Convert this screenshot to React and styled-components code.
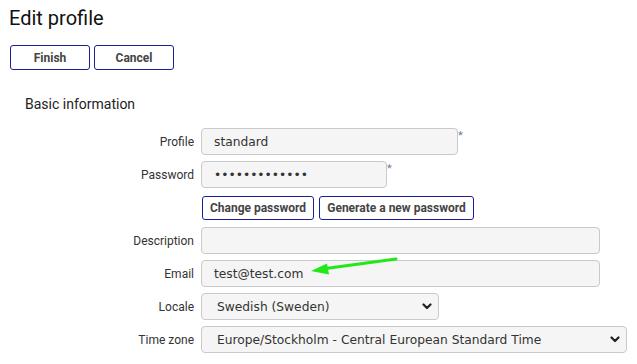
import React from 'react'
import styled, { createGlobalStyle } from 'styled-components'

const GlobalStyle = createGlobalStyle`
    body {
        margin: 0;
        background: #fff;
        font-family: Roboto, "Liberation Sans", sans-serif;
    }
`

const Chevron = () => (
    <ChevronIcon width="10" height="7" viewBox="0 0 10 7">
        <path d="M1.5 1.5 L5 5 L8.5 1.5" fill="none" stroke="#222" strokeWidth="2.2" strokeLinecap="round" strokeLinejoin="round" />
    </ChevronIcon>
)

const GreenArrow = () => (
    <ArrowIcon width="100" height="20" viewBox="0 0 100 20">
        <line x1="94" y1="2" x2="20" y2="12" stroke="#22e81a" strokeWidth="3" strokeLinecap="round" />
        <polygon points="9,14 25,6.5 27,17.5" fill="#22e81a" />
    </ArrowIcon>
)

const App = () => {
    return (
        <Page>
            <GlobalStyle />
            <Title>Edit profile</Title>
            <Toolbar>
                <Button width={80}>Finish</Button>
                <Button width={80}>Cancel</Button>
            </Toolbar>
            <Section>Basic information</Section>
            <Form>
                <Row>
                    <Label>Profile</Label>
                    <Input width={257} defaultValue="standard" />
                    <Required>*</Required>
                </Row>
                <Row>
                    <Label>Password</Label>
                    <Input width={186} type="password" defaultValue="1234567890123" />
                    <Required>*</Required>
                </Row>
                <Row>
                    <Label />
                    <SmallButtons>
                        <Button small width={112}>Change password</Button>
                        <Button small width={155}>Generate a new password</Button>
                    </SmallButtons>
                </Row>
                <Row>
                    <Label>Description</Label>
                    <Input width={399} defaultValue="" />
                </Row>
                <Row>
                    <Label>Email</Label>
                    <Field>
                        <Input width={399} defaultValue="test@test.com" />
                        <GreenArrow />
                    </Field>
                </Row>
                <Row>
                    <Label>Locale</Label>
                    <Field>
                        <Select width={238} defaultValue="sv">
                            <option value="sv">Swedish (Sweden)</option>
                        </Select>
                        <Chevron />
                    </Field>
                </Row>
                <Row>
                    <Label>Time zone</Label>
                    <Field>
                        <Select width={426} defaultValue="sto">
                            <option value="sto">Europe/Stockholm - Central European Standard Time</option>
                        </Select>
                        <Chevron />
                    </Field>
                </Row>
            </Form>
        </Page>
    )
}

export default App

const Page = styled.div`
    padding: 6px 0 0 0;
`
const Title = styled.h1`
    margin: 0 0 0 9px;
    font-size: 20px;
    line-height: 24px;
    font-weight: 400;
    color: #111;
`
const Toolbar = styled.div`
    display: flex;
    gap: 4px;
    margin: 15px 0 0 10px;
`
const Button = styled.button`
    box-sizing: border-box;
    width: ${p => p.width}px;
    height: ${p => (p.small ? 24 : 25)}px;
    padding: 0;
    background: #fff;
    border: 1px solid #1b1f96;
    border-radius: 3px;
    font-family: Roboto, "Liberation Sans", sans-serif;
    font-size: 12px;
    font-weight: 700;
    color: #444;
`
const Section = styled.div`
    margin: 26px 0 0 25px;
    font-size: 14px;
    line-height: 17px;
    color: #222;
`
const Form = styled.div`
    display: flex;
    flex-direction: column;
    gap: 6px;
    margin-top: 15px;
`
const Row = styled.div`
    display: flex;
    align-items: center;
    height: 27px;
`
const Label = styled.div`
    width: 194px;
    margin-right: 7px;
    text-align: right;
    font-size: 12px;
    color: #333;
`
const Field = styled.div`
    position: relative;
    display: flex;
`
const Input = styled.input`
    box-sizing: border-box;
    width: ${p => p.width}px;
    height: 27px;
    padding: 0 12px;
    background: #f5f5f5;
    border: 1px solid #c9c9c9;
    border-radius: 4px;
    font-family: "DejaVu Sans", Verdana, sans-serif;
    font-size: 12.25px;
    color: #333;
    outline: none;
`
const Select = styled.select`
    box-sizing: border-box;
    width: ${p => p.width}px;
    height: 27px;
    padding: 0 12px 0 15px;
    appearance: none;
    background: #f5f5f5;
    border: 1px solid #c9c9c9;
    border-radius: 4px;
    font-family: "DejaVu Sans", Verdana, sans-serif;
    font-size: 12.25px;
    color: #333;
    outline: none;
`
const ChevronIcon = styled.svg`
    position: absolute;
    right: 7px;
    top: 10px;
    pointer-events: none;
`
const ArrowIcon = styled.svg`
    position: absolute;
    left: 101px;
    top: -3px;
    pointer-events: none;
`
const Required = styled.span`
    align-self: flex-start;
    margin: 2px 0 0 0;
    font-size: 11px;
    line-height: 12px;
    color: #6a7fa0;
`
const SmallButtons = styled.div`
    display: flex;
    gap: 5px;
    margin-left: 1px;
`
